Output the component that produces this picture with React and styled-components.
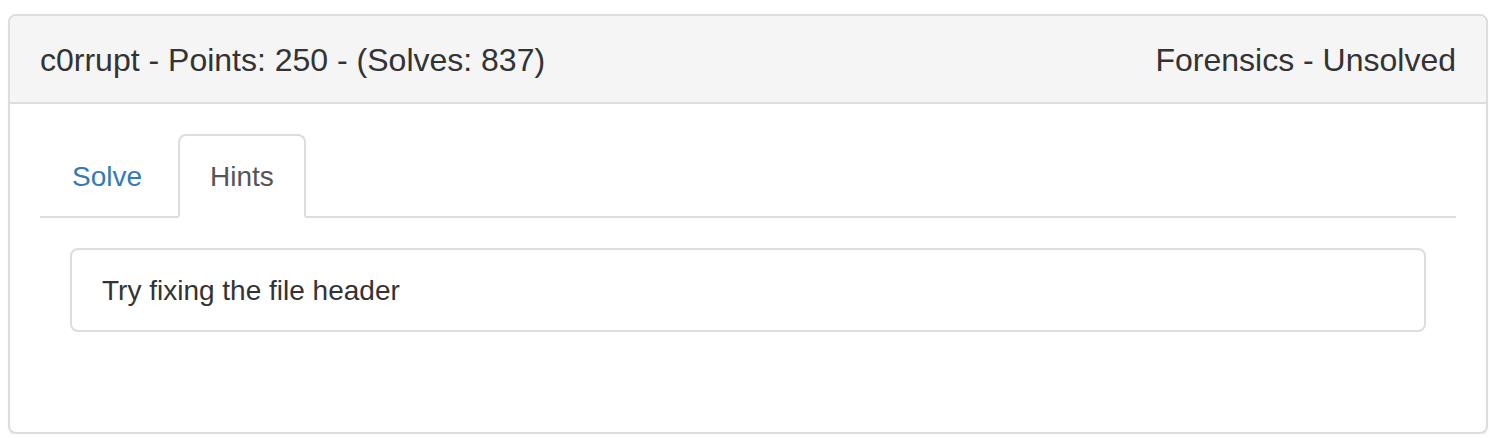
import React, { useState } from "react";
import styled, { createGlobalStyle } from "styled-components";

const GlobalStyle = createGlobalStyle`
  *, *::before, *::after { box-sizing: border-box; }
  body {
    margin: 0;
    background: #fff;
    color: #333;
    font-family: "Liberation Sans", Arial, sans-serif;
    font-size: 28px;
    line-height: 40px;
  }
`;

const Page = styled.main`
  padding: 14px 18px 0 8px;
`;

const Panel = styled.section`
  border: 2px solid #ddd;
  border-radius: 8px;
  background: #fff;
  box-shadow: 0 2px 2px rgba(0, 0, 0, 0.05);
`;

const PanelHeading = styled.header`
  display: flex;
  justify-content: space-between;
  padding: 26px 30px 24px;
  border-bottom: 2px solid #ddd;
  border-radius: 6px 6px 0 0;
  background: #f5f5f5;
`;

const Title = styled.h3`
  margin: 0;
  font-size: 32px;
  font-weight: 400;
  line-height: 36px;
`;

const PanelBody = styled.div`
  padding: 30px 30px 100px;
`;

const TabList = styled.div`
  display: flex;
  gap: 4px;
  border-bottom: 2px solid #ddd;
`;

const Tab = styled.button`
  margin: 0 0 -2px;
  padding: 21px 30px 19px;
  border-width: 2px;
  border-style: solid;
  border-color: ${(p) => (p.$active ? "#ddd #ddd #fff" : "transparent")};
  border-radius: 8px 8px 0 0;
  background: ${(p) => (p.$active ? "#fff" : "transparent")};
  color: ${(p) => (p.$active ? "#555" : "#337ab7")};
  font: inherit;
  cursor: pointer;
`;

const TabPanel = styled.div`
  padding: 30px 30px 0;
`;

const HintList = styled.ul`
  margin: 0;
  padding: 0;
  list-style: none;
`;

const Hint = styled.li`
  padding: 21px 30px 19px;
  border: 2px solid #ddd;
  border-radius: 8px;
`;

const tabs = ["Solve", "Hints"];

export default function App() {
  const [active, setActive] = useState("Hints");
  return (
    <Page>
      <GlobalStyle />
      <Panel>
        <PanelHeading>
          <Title>c0rrupt - Points: 250 - (Solves: 837)</Title>
          <Title as="span">Forensics - Unsolved</Title>
        </PanelHeading>
        <PanelBody>
          <TabList role="tablist">
            {tabs.map((name) => (
              <Tab
                key={name}
                id={`tab-${name}`}
                type="button"
                role="tab"
                aria-selected={active === name}
                aria-controls="tab-content"
                $active={active === name}
                onClick={() => setActive(name)}
              >
                {name}
              </Tab>
            ))}
          </TabList>
          <TabPanel id="tab-content" role="tabpanel" aria-labelledby={`tab-${active}`}>
            {active === "Hints" && (
              <HintList>
                <Hint>Try fixing the file header</Hint>
              </HintList>
            )}
          </TabPanel>
        </PanelBody>
      </Panel>
    </Page>
  );
}
